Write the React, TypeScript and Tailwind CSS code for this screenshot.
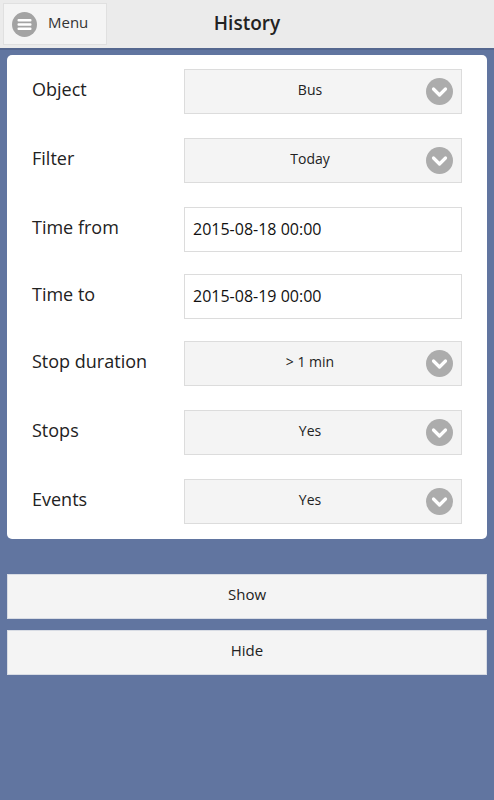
import React from "react";

type Row = {
  label: string;
  value: string;
  kind: "select" | "input";
  gap: string;
};

const rows: Row[] = [
  { label: "Object", value: "Bus", kind: "select", gap: "mt-0" },
  { label: "Filter", value: "Today", kind: "select", gap: "mt-[24px]" },
  { label: "Time from", value: "2015-08-18 00:00", kind: "input", gap: "mt-[24px]" },
  { label: "Time to", value: "2015-08-19 00:00", kind: "input", gap: "mt-[22px]" },
  { label: "Stop duration", value: "> 1 min", kind: "select", gap: "mt-[22px]" },
  { label: "Stops", value: "Yes", kind: "select", gap: "mt-[24px]" },
  { label: "Events", value: "Yes", kind: "select", gap: "mt-[24px]" },
];

const Chevron = () => (
  <svg width="27" height="27" viewBox="0 0 27 27">
    <circle cx="13.5" cy="13.5" r="13.5" fill="#acacac" />
    <path
      d="M7.5 11 L13.5 17 L19.5 11"
      fill="none"
      stroke="#ffffff"
      strokeWidth="3.2"
      strokeLinecap="round"
      strokeLinejoin="round"
    />
  </svg>
);

const MenuIcon = () => (
  <svg width="25" height="25" viewBox="0 0 25 25">
    <circle cx="12.5" cy="12.5" r="12.5" fill="#a3a3a3" />
    <rect x="5.5" y="7" width="14" height="2.4" rx="1" fill="#ffffff" />
    <rect x="5.5" y="11.3" width="14" height="2.4" rx="1" fill="#ffffff" />
    <rect x="5.5" y="15.6" width="14" height="2.4" rx="1" fill="#ffffff" />
  </svg>
);

const FieldRow: React.FC<{ row: Row }> = ({ row }) => {
  return (
    <div className={`flex items-center h-[45px] ${row.gap}`}>
      <div className="w-[152px] text-[18px] text-[#222] pb-[4px]">{row.label}</div>
      {row.kind === "select" ? (
        <div className="relative flex-1 h-full bg-[#f4f4f4] border border-[#dcdcdc] flex items-center justify-center pr-[26px]">
          <span className="text-[14px] text-[#222] pb-[4px]">{row.value}</span>
          <div className="absolute right-[8px] top-[8px]">
            <Chevron />
          </div>
        </div>
      ) : (
        <div className="flex-1 h-full bg-white border border-[#dcdcdc] flex items-center pl-[8px]">
          <span className="text-[16px] text-[#111] pb-[2px]">{row.value}</span>
        </div>
      )}
    </div>
  );
};

export default function App() {
  return (
    <div
      className="min-h-[800px] bg-[#6175a0] flex flex-col"
      style={{ fontFamily: '"Open Sans", "Noto Sans", sans-serif' }}
    >
      <header className="relative h-[50px] bg-[#ebebeb] border-b-2 border-[#55678f] flex items-start">
        <button className="mt-[3px] ml-[3px] w-[104px] h-[42px] bg-[#f4f4f4] border border-[#e0e0e0] flex items-center pl-[8px] gap-[11px]">
          <MenuIcon />
          <span className="text-[15px] text-[#333] pb-[3px]">Menu</span>
        </button>
        <h1 className="absolute left-0 right-0 top-[9px] text-center text-[19px] font-semibold text-[#222] pointer-events-none">
          History
        </h1>
      </header>

      <div className="mx-[7px] mt-[5px] bg-white rounded-[5px] pl-[25px] pr-[25px] pt-[14px] pb-[15px] flex flex-col">
        {rows.map((row) => (
          <FieldRow key={row.label} row={row} />
        ))}
      </div>

      <div className="mx-[7px] mt-[35px] flex flex-col gap-[11px]">
        <button className="h-[45px] bg-[#f4f4f4] border border-[#d8dce4] text-[15px] text-[#222] pb-[4px]">
          Show
        </button>
        <button className="h-[45px] bg-[#f4f4f4] border border-[#d8dce4] text-[15px] text-[#222] pb-[4px]">
          Hide
        </button>
      </div>
    </div>
  );
}
